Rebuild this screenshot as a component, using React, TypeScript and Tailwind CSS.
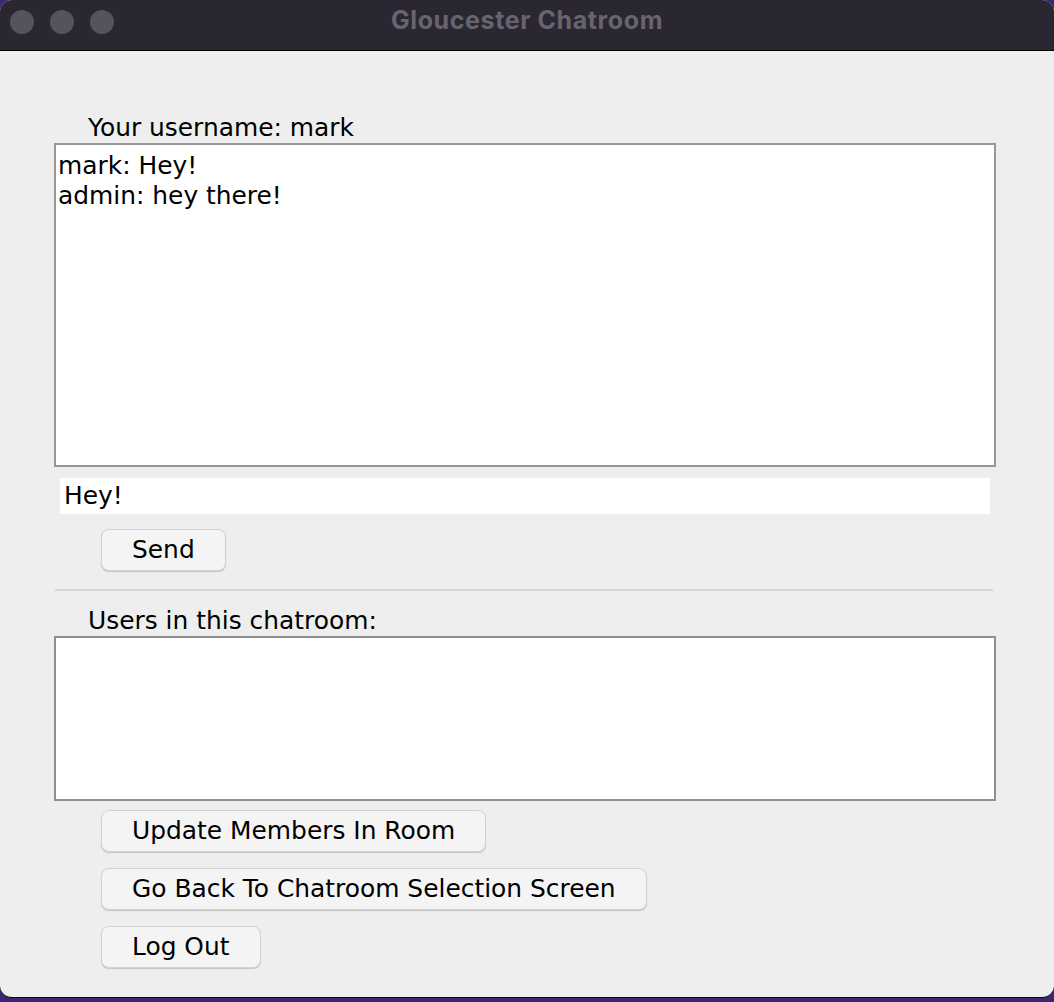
import React from 'react'

const body = { fontFamily: '"DejaVu Sans", "Liberation Sans", sans-serif' }

function MacButton({ label }: { label: string }) {
  return (
    <button
      className="ml-[47px] h-[42px] self-start rounded-[8px] border border-[#d2d2d2] bg-[#f4f4f4] px-[30px] text-[24.9px] leading-[40px] text-black shadow-[0_1px_1px_rgba(0,0,0,0.18)]"
      style={body}
    >
      {label}
    </button>
  )
}

export default function App() {
  return (
    <div className="h-[1002px] w-[1054px] overflow-hidden bg-[#3b2770]">
      <div className="flex h-[998px] flex-col overflow-hidden rounded-[12px] border-b border-black bg-[#eeeeee]">
        {/* title bar */}
        <div className="relative flex h-[51px] shrink-0 items-center justify-center border-b border-black bg-[#2a2733]">
          <div className="absolute left-[10px] top-[10px] flex gap-[16px]">
            <span className="h-[24px] w-[24px] rounded-full bg-[#57535e]" />
            <span className="h-[24px] w-[24px] rounded-full bg-[#57535e]" />
            <span className="h-[24px] w-[24px] rounded-full bg-[#57535e]" />
          </div>
          <span
            className="mb-[8px] text-[25px] font-bold tracking-[0.6px] text-[#68646f]"
            style={{ fontFamily: 'Inter, "Liberation Sans", sans-serif' }}
          >
            Gloucester Chatroom
          </span>
        </div>

        <div className="flex flex-col pl-[54px] text-black" style={body}>
          <div className="mt-[62px] h-[30px] pl-[34px] text-[24.9px] leading-[30px]">Your username: mark</div>

          <div className="h-[324px] w-[942px] border-2 border-[#979797] bg-white pl-[2px] pt-[6px] text-[24.9px] leading-[30px]">
            <div>mark: Hey!</div>
            <div>admin: hey there!</div>
          </div>

          <div className="ml-[6px] mt-[11px] h-[36px] w-[930px] bg-white pl-[4px] text-[24.9px] leading-[36px]">Hey!</div>

          <div className="mt-[15px] flex flex-col">
            <MacButton label="Send" />
          </div>

          <div className="ml-[1px] mt-[18px] h-[2px] w-[938px] bg-[#d5d5d5]" />

          <div className="mt-[15px] h-[30px] pl-[34px] text-[24.9px] leading-[30px]">Users in this chatroom:</div>

          <div className="h-[165px] w-[942px] border-2 border-[#8f8f8f] bg-white" />

          <div className="mt-[9px] flex flex-col gap-[16px]">
            <MacButton label="Update Members In Room" />
            <MacButton label="Go Back To Chatroom Selection Screen" />
            <MacButton label="Log Out" />
          </div>
        </div>
      </div>
    </div>
  )
}
